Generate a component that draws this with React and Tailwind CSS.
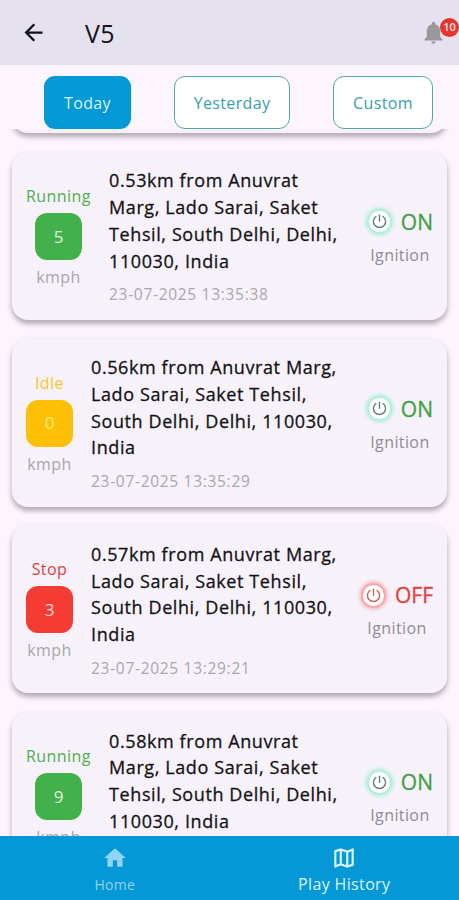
import React from 'react';
import {
  MdArrowBack,
  MdHome,
  MdNotifications,
  MdOutlineMap,
} from 'react-icons/md';

const statusStyles = {
  Running: { text: 'text-[#4caf50]', box: 'bg-[#42b04b]', value: 'text-[#e2f5df]' },
  Idle: { text: 'text-[#f8c52c]', box: 'bg-[#fdc007]', value: 'text-[#ffee70]' },
  Stop: { text: 'text-[#e0403c]', box: 'bg-[#f43c35]', value: 'text-[#ffdcd5]' },
};

const records = [
  {
    status: 'Running',
    speed: 5,
    lines: [
      '0.53km from Anuvrat',
      'Marg, Lado Sarai, Saket',
      'Tehsil, South Delhi, Delhi,',
      '110030, India',
    ],
    time: '23-07-2025 13:35:38',
    ignition: true,
  },
  {
    status: 'Idle',
    speed: 0,
    lines: [
      '0.56km from Anuvrat Marg,',
      'Lado Sarai, Saket Tehsil,',
      'South Delhi, Delhi, 110030,',
      'India',
    ],
    time: '23-07-2025 13:35:29',
    ignition: true,
  },
  {
    status: 'Stop',
    speed: 3,
    lines: [
      '0.57km from Anuvrat Marg,',
      'Lado Sarai, Saket Tehsil,',
      'South Delhi, Delhi, 110030,',
      'India',
    ],
    time: '23-07-2025 13:29:21',
    ignition: false,
  },
  {
    status: 'Running',
    speed: 9,
    lines: [
      '0.58km from Anuvrat',
      'Marg, Lado Sarai, Saket',
      'Tehsil, South Delhi, Delhi,',
      '110030, India',
    ],
    time: '',
    ignition: true,
  },
];

const cardShadow =
  'shadow-[0_4px_5px_rgba(70,60,80,0.34),0_2px_6px_rgba(70,60,80,0.1)]';

const PowerIcon = ({ on }) => (
  <span
    className={`flex h-[25px] w-[25px] shrink-0 items-center justify-center rounded-full border-2 bg-white ${
      on
        ? 'border-[#b4efdc] text-[#66836f] shadow-[0_0_4px_1px_#a5ecd6]'
        : 'border-[#f5a9ab] text-[#b86a62] shadow-[0_0_4px_1px_#f7a5a8]'
    }`}
  >
    <svg
      viewBox="0 0 16 16"
      className="h-[15px] w-[15px]"
      fill="none"
      stroke="currentColor"
      strokeWidth="1.5"
      strokeLinecap="round"
    >
      <path d="M8 1.3v6.5" />
      <path d="M4.2 2.7a6.5 6.5 0 1 0 7.6 0" />
    </svg>
  </span>
);

const HistoryCard = ({ record }) => {
  const style = statusStyles[record.status];

  return (
    <div
      className={`flex h-[168px] shrink-0 items-center rounded-[16px] bg-[#f7f2fa] pt-px pr-[14px] pl-[14px] ${cardShadow}`}
    >
      {/* Status and speed */}
      <div className="flex shrink-0 flex-col items-center">
        <span className={`text-[16px] leading-[22px] tracking-[0.45px] ${style.text}`}>
          {record.status}
        </span>
        <div
          className={`mt-[6px] flex h-[47px] w-[47px] items-center justify-center rounded-[12px] text-[17px] ${style.box} ${style.value}`}
        >
          {record.speed}
        </div>
        <span className="mt-[6px] text-[16px] leading-[22px] tracking-[0.45px] text-[#a9a5ab]">
          kmph
        </span>
      </div>

      {/* Address */}
      <div className="ml-[18px] w-0 flex-1 whitespace-nowrap">
        {record.lines.map((line) => (
          <p
            key={line}
            className="text-[18px] leading-[26.8px] tracking-[0.6px] text-[#141216] [-webkit-text-stroke:0.3px_#141216]"
          >
            {line}
          </p>
        ))}
        <p className="mt-[9px] h-[22px] text-[15.5px] leading-[22px] tracking-[0.7px] text-[#aaa6ac]">
          {record.time}
        </p>
      </div>

      {/* Ignition */}
      <div className="flex shrink-0 flex-col items-center">
        <div className="flex items-center gap-[9px]">
          <PowerIcon on={record.ignition} />
          <span
            className={`text-[21px] leading-[30px] [-webkit-text-stroke:0.3px_currentColor] ${
              record.ignition ? 'text-[#43a047]' : 'text-[#e2403a]'
            }`}
          >
            {record.ignition ? 'ON' : 'OFF'}
          </span>
        </div>
        <span className="mt-[7px] text-[16px] leading-[22px] tracking-[0.4px] text-[#8f8b92]">
          Ignition
        </span>
      </div>
    </div>
  );
};

const App = () => {
  return (
    <div className="flex h-[900px] w-[459px] flex-col overflow-hidden bg-[#fdf5fd] font-['Open_Sans','Noto_Sans',sans-serif]">
      <header className="flex h-[65px] shrink-0 items-center bg-[#e6e1ee] pl-[20px]">
        <MdArrowBack className="h-[27px] w-[27px] text-[#111014]" />
        <h1 className="ml-[38px] text-[25px] leading-[34px] tracking-[0.3px] text-[#16141a]">
          V5
        </h1>
        <div className="relative mr-[12px] ml-auto">
          <MdNotifications className="h-[27px] w-[27px] text-[#9a979b]" />
          <span className="absolute -top-px left-[20px] flex h-[19px] w-[19px] items-center justify-center rounded-full bg-[#e8352e] text-[11px] font-semibold text-[#ffe9e5]">
            10
          </span>
        </div>
      </header>

      <div className="flex h-[64px] shrink-0 items-end justify-between pr-[26px] pl-[44px] text-[16px] tracking-[0.35px]">
        <button className="h-[53px] w-[87px] rounded-[11px] bg-[#0598d6] text-[#d6f5f7]">
          Today
        </button>
        <button className="h-[53px] w-[116px] rounded-[11px] border border-[#4fa9a6] bg-white text-[#35a0ac]">
          Yesterday
        </button>
        <button className="h-[53px] w-[100px] rounded-[11px] border border-[#4fa9a6] bg-white text-[#35a0ac]">
          Custom
        </button>
      </div>

      {/* History list, scrolled a little past the first card */}
      <div className="flex min-h-0 flex-1 flex-col justify-start gap-[18.8px] overflow-hidden pr-[12px] pl-[12px]">
        <div className="-mt-[164px] h-[168px] shrink-0">
          <div className={`h-full rounded-[16px] bg-[#f9f2fb] ${cardShadow}`} />
        </div>
        {records.map((record) => (
          <HistoryCard key={record.lines[0]} record={record} />
        ))}
      </div>

      <nav className="grid h-[64px] shrink-0 grid-cols-2 bg-[#0598d6]">
        <div className="flex flex-col items-center pt-[9px] text-[#8fd4f3]">
          <MdHome className="h-[26px] w-[26px]" />
          <span className="mt-[4px] text-[14px] leading-[20px] tracking-[0.25px]">Home</span>
        </div>
        <div className="flex flex-col items-center pt-[9px] text-[#d9f6fa]">
          <MdOutlineMap className="h-[26px] w-[26px]" />
          <span className="mt-[2px] text-[16px] leading-[22px] tracking-[0.35px]">
            Play History
          </span>
        </div>
      </nav>
    </div>
  );
};

export default App;
